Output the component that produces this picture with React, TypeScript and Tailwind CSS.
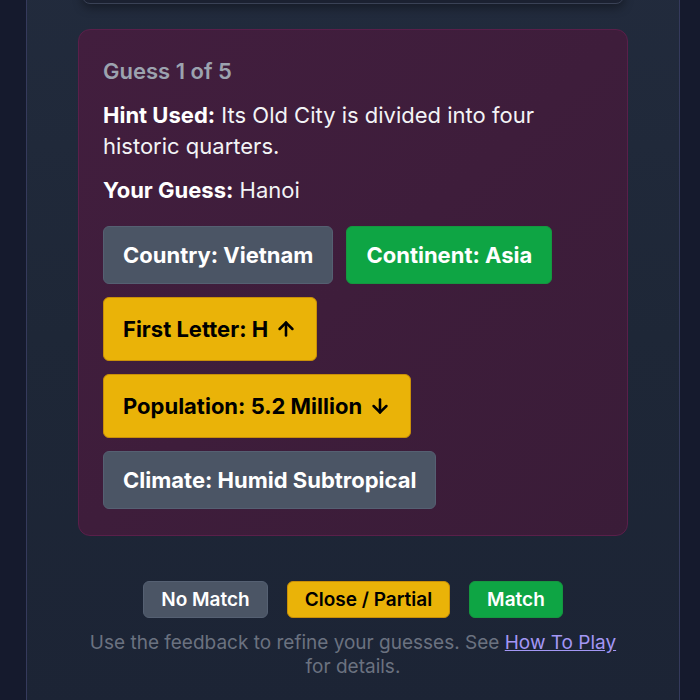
import React from "react";
import { ArrowUp, ArrowDown } from "lucide-react";

function Chip({
  children,
  tone,
}: {
  children: React.ReactNode;
  tone: "gray" | "green" | "yellow";
}) {
  if (tone === "yellow") {
    return (
      <div className="flex items-center gap-[7px] rounded-md border border-[#c98f08] bg-[#eab308] py-[17px] pl-[19px] pr-[19px] text-[22px] font-bold leading-7 text-black">
        {children}
      </div>
    );
  }
  if (tone === "green") {
    return (
      <div className="flex items-center rounded-md border border-[#15973f] bg-[#0ea544] px-[19px] py-[14px] text-[22px] font-bold leading-7 text-white">
        {children}
      </div>
    );
  }
  return (
    <div className="flex items-center rounded-md border border-[#556072] bg-[#4b5565] px-[19px] py-[14px] text-[22px] font-bold leading-7 text-white">
      {children}
    </div>
  );
}

export default function App() {
  return (
    <div
      className="min-h-[700px] bg-[#151a2d] pl-[26px] pr-[20px]"
      style={{ fontFamily: "Inter, 'Noto Sans', sans-serif" }}
    >
      <div className="min-h-[700px] border-x border-[#353a5c] bg-gradient-to-b from-[#222b3d] via-[#1e2737] to-[#1c2435] px-[51px] pb-8">
        <div className="mx-[4px] -mt-[44px] h-[48px] rounded-lg border border-[#3a4256] bg-[#1b2131] shadow-[0_4px_10px_rgba(0,0,0,0.35)]" />
        <div className="mt-[25px] rounded-xl border border-[#5a1f4a] bg-gradient-to-br from-[#421e3e] to-[#3a1c38] px-6 pb-[26px] pt-[26px]">
          <div className="text-[22px] font-semibold leading-[30px] text-[#9ca3af]">
            Guess 1 of 5
          </div>
          <p className="mt-[14px] text-[22px] leading-[31px] text-[#f3f4f6]">
            <span className="font-bold text-white">Hint Used:</span> Its Old
            City is divided into four historic quarters.
          </p>
          <p className="mt-[13px] text-[22px] leading-[30px] text-[#f3f4f6]">
            <span className="font-bold text-white">Your Guess:</span> Hanoi
          </p>
          <div className="mt-[21px] flex flex-wrap gap-[13px]">
            <Chip tone="gray">Country: Vietnam</Chip>
            <Chip tone="green">Continent: Asia</Chip>
            <Chip tone="yellow">
              <span>First Letter: H</span>
              <ArrowUp size={22} strokeWidth={2.8} className="-my-1" />
            </Chip>
            <Chip tone="yellow">
              <span>Population: 5.2 Million</span>
              <ArrowDown size={22} strokeWidth={2.8} className="-my-1" />
            </Chip>
            <Chip tone="gray">Climate: Humid Subtropical</Chip>
          </div>
        </div>

        <div className="mt-[45px] flex justify-center gap-[19px]">
          <div className="rounded-md border border-[#556072] bg-[#4b5565] px-[17px] py-[4px] text-[19px] font-semibold leading-[27px] text-white">
            No Match
          </div>
          <div className="rounded-md border border-[#c98f08] bg-[#eab308] px-[17px] py-[4px] text-[19px] font-semibold leading-[27px] text-black">
            Close / Partial
          </div>
          <div className="rounded-md border border-[#15973f] bg-[#0ea544] px-[17px] py-[4px] text-[19px] font-semibold leading-[27px] text-white">
            Match
          </div>
        </div>
        <p className="mx-auto mt-[13px] max-w-[540px] text-center text-[19px] leading-6 text-[#6b7280]">
          Use the feedback to refine your guesses. See{" "}
          <a href="#" className="text-[#a397f5] underline">
            How To Play
          </a>{" "}
          for details.
        </p>
      </div>
    </div>
  );
}
